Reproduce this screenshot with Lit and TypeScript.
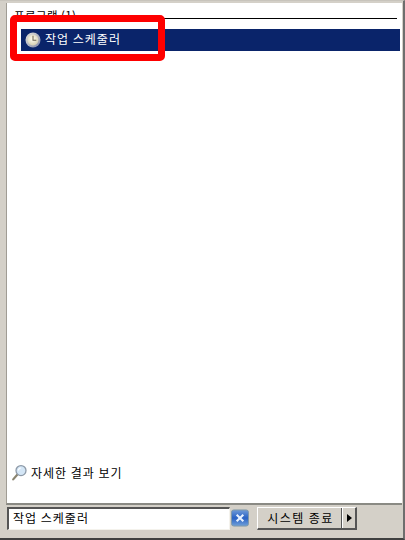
import { LitElement, html, css } from "lit";
import { customElement } from "lit/decorators.js";

@customElement("app-root")
export class AppRoot extends LitElement {
  static styles = css`
    :host { display: block; width: 405px; height: 540px; position: relative; overflow: hidden;
      font-family: "Noto Sans CJK KR", "Liberation Sans", sans-serif; font-size: 12px; color: #000; }
    .frame { box-sizing: border-box; width: 405px; height: 540px; background: #d4d0c8;
      border-top: 1px solid #c8c4bc; border-right: 2px solid #6e6e6e; border-bottom: 2px solid #404040;
      padding: 2px 1px 0 6px; display: flex; flex-direction: column; }
    .panel { height: 502px; flex: none; box-sizing: border-box; background: #fff; border-left: 1px solid #a09c94; border-bottom: 2px solid #8a8a84;
      display: flex; flex-direction: column; padding: 6px 0 0 0; }
    .head { margin: 0 5px 0 7px; height: 8px; border-bottom: 1px solid #000; line-height: 10px; padding-top: 1px; white-space: nowrap; letter-spacing: 0.4px; font-size: 11.5px; flex: none; }
    .row { margin: 10px 2px 0 14px; height: 22px; background: #0a246a; color: #fff; display: flex; align-items: center; gap: 4px; padding-left: 4px; letter-spacing: 1px; flex: none; }
    .row span { line-height: 20px; padding-bottom: 2px; }
    .spacer { flex: 1; }
    .more { display: flex; align-items: center; gap: 3px; margin: 0 0 21px 4px; letter-spacing: 1px; line-height: 16px; }
    .bar { flex: 1; display: flex; align-items: flex-start; padding: 2px 0 0 1px; }
    .search { box-sizing: border-box; width: 223px; height: 23px; background: #fff; border-top: 2px solid #555; border-left: 2px solid #555;
      border-right: 1px solid #f4f2ec; border-bottom: 1px solid #f4f2ec; padding-left: 4px; line-height: 17px; letter-spacing: 1px; flex: none; }
    .clear { margin: 2px 0 0 1px; display: block; flex: none; }
    .btn { display: flex; margin: 0 0 0 8px; height: 23px; box-sizing: border-box; border-top: 1px solid #fff; border-left: 1px solid #fff;
      border-right: 2px solid #555; border-bottom: 2px solid #555; flex: none; }
    .shut { width: 84px; padding-left: 2px; display: flex; align-items: center; justify-content: center; letter-spacing: 1.4px; line-height: 18px; border-right: 1px solid #555; box-sizing: border-box; }
    .arrow { width: 12px; display: flex; align-items: center; justify-content: center; border-left: 1px solid #fff; }
    .mark { position: absolute; left: 10px; top: 15px; width: 155px; height: 46px; box-sizing: border-box; border: 7px solid #fe0000; border-radius: 5px; }
  `;
  render() {
    return html`
      <div class="frame">
        <div class="panel">
          <div class="head">프로그램 (1)</div>
          <div class="row">
            <svg width="16" height="16" viewBox="0 0 17 17">
              <defs><linearGradient id="c" x1="0" y1="0" x2="1" y2="1"><stop offset="0" stop-color="#e8e6dc"/><stop offset="1" stop-color="#7f86a8"/></linearGradient>
              <radialGradient id="f" cx=".45" cy=".4" r=".7"><stop offset="0" stop-color="#fffef2"/><stop offset="1" stop-color="#cfc8a8"/></radialGradient></defs>
              <circle cx="8.5" cy="8.5" r="8" fill="url(#c)"/>
              <circle cx="8.5" cy="8.5" r="5.8" fill="url(#f)"/>
              <path d="M8.5 4v4.7h3.5" fill="none" stroke="#6d6450" stroke-width="1.1"/>
            </svg>
            <span>작업 스케줄러</span>
          </div>
          <div class="spacer"></div>
          <div class="more">
            <svg width="17" height="18" viewBox="0 0 17 18">
              <path d="M6.2 10.8 2.2 15.4" stroke="#8a8470" stroke-width="2.2" stroke-linecap="round"/>
              <circle cx="10" cy="6.6" r="5" fill="#d4e6f6" stroke="#8e9aa8" stroke-width="1.3"/>
              <path d="M7.5 6.6a2.6 2.6 0 0 1 2.4-2.6" fill="none" stroke="#fff" stroke-width="1.2"/>
            </svg>
            <span>자세한 결과 보기</span>
          </div>
        </div>
        <div class="bar">
          <div class="search">작업 스케줄러</div>
          <svg class="clear" width="18" height="18" viewBox="0 0 19 18">
            <defs><linearGradient id="b" x1="0" y1="0" x2="0" y2="1"><stop offset="0" stop-color="#6f9bd8"/><stop offset=".5" stop-color="#2a62c4"/><stop offset="1" stop-color="#6fa0d8"/></linearGradient></defs>
            <rect x=".5" y=".5" width="18" height="17" rx="2.5" fill="url(#b)" stroke="#7d97a8"/>
            <path d="M6 5.5 13 12.5M13 5.5 6 12.5" stroke="#e8f2ff" stroke-width="2.2"/>
          </svg>
          <div class="btn">
            <div class="shut">시스템 종료</div>
            <div class="arrow"><svg width="5" height="8" viewBox="0 0 5 8"><path d="M0 0 5 4 0 8z" fill="#000"/></svg></div>
          </div>
        </div>
      </div>
      <div class="mark"></div>
    `;
  }
}
